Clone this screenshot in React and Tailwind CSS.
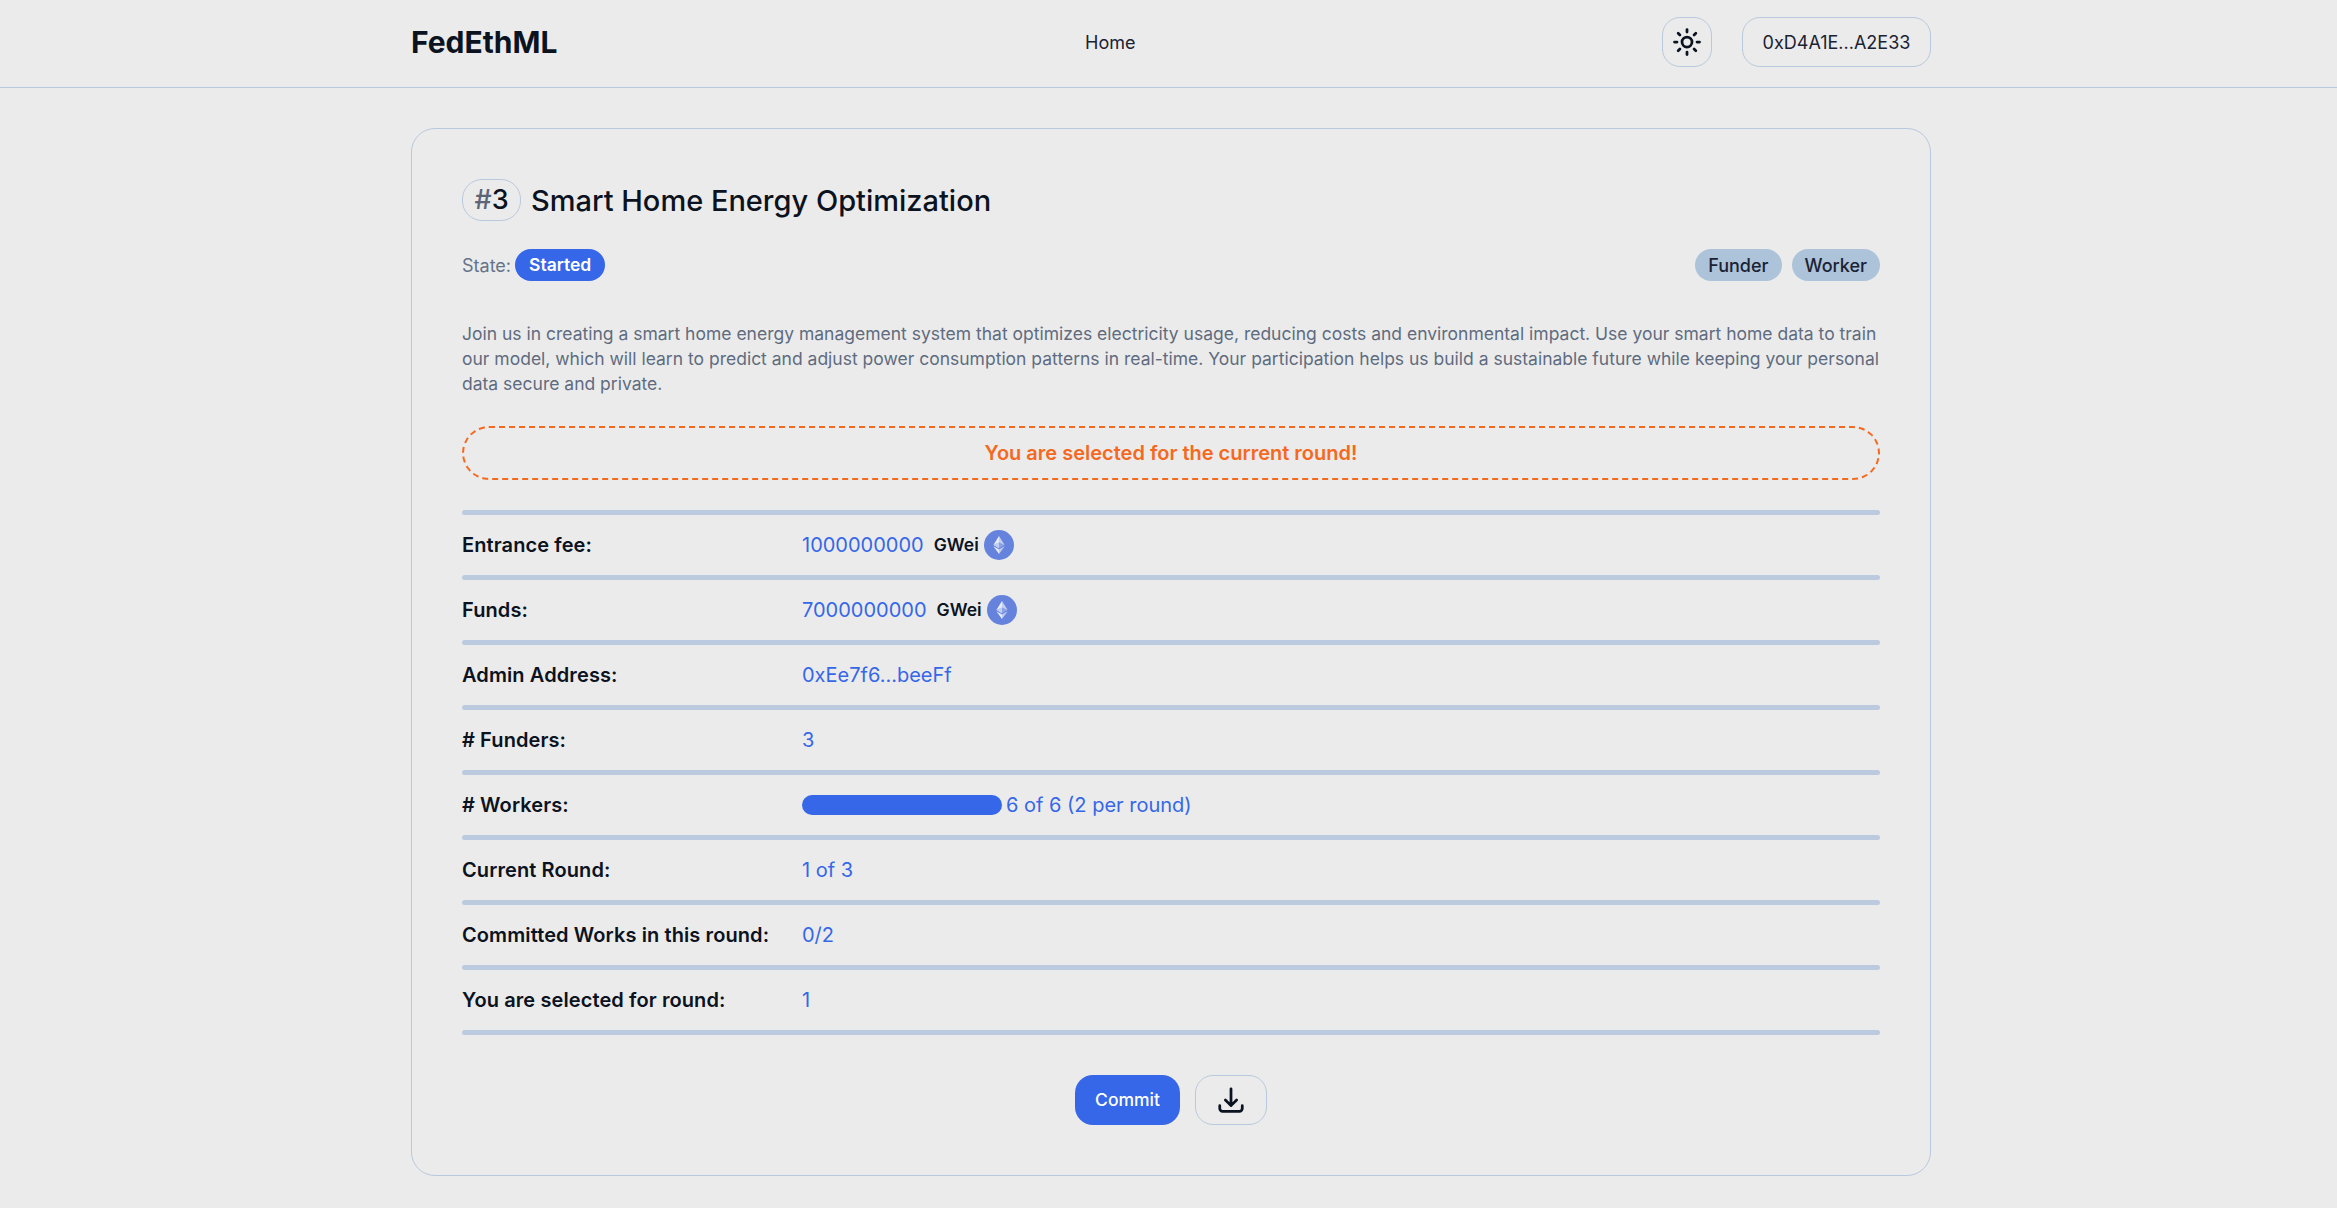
import React from 'react';
import { Sun } from 'lucide-react';

const EthIcon = () => (
    <svg viewBox="0 0 32 32" className="w-[30px] h-[30px] shrink-0">
        <circle cx="16" cy="16" r="16" fill="#6583dd" />
        <path d="M16 6.5v6.8l6 2.7z" fill="#fff" fillOpacity="0.6" />
        <path d="M16 6.5L10 16l6-2.7z" fill="#fff" fillOpacity="0.85" />
        <path d="M16 20.8v4.7l6-8.3z" fill="#fff" fillOpacity="0.6" />
        <path d="M16 25.5v-4.7l-6-3.6z" fill="#fff" fillOpacity="0.85" />
        <path d="M16 19.6l6-3.6-6-2.7z" fill="#fff" fillOpacity="0.25" />
        <path d="M10 16l6 3.6v-6.3z" fill="#fff" fillOpacity="0.6" />
    </svg>
);

const DownloadIcon = () => (
    <svg viewBox="0 0 24 24" fill="none" stroke="#0b1220" strokeWidth="2.2" strokeLinecap="round" strokeLinejoin="round" className="w-[30px] h-[30px]">
        <path d="M3 16.5v2.25A2.25 2.25 0 0 0 5.25 21h13.5A2.25 2.25 0 0 0 21 18.75V16.5M16.5 12 12 16.5m0 0L7.5 12m4.5 4.5V3" />
    </svg>
);

const Gwei = ({ amount }) => (
    <div className="flex items-center">
        <span>{amount}</span>
        <span className="ml-[10px] mr-[5px] text-[17.5px] font-semibold text-[#0b1220]">GWei</span>
        <EthIcon />
    </div>
);

const rows = [
    { label: 'Entrance fee:', value: <Gwei amount="1000000000" /> },
    { label: 'Funds:', value: <Gwei amount="7000000000" /> },
    { label: 'Admin Address:', value: '0xEe7f6...beeFf' },
    { label: '# Funders:', value: '3' },
    {
        label: '# Workers:',
        value: (
            <div className="flex items-center">
                <div className="w-[200px] h-5 rounded-full bg-[#3567e8]" />
                <span className="ml-1">6 of 6 (2 per round)</span>
            </div>
        ),
    },
    { label: 'Current Round:', value: '1 of 3' },
    { label: 'Committed Works in this round:', value: '0/2' },
    { label: 'You are selected for round:', value: '1' },
];

const Rule = () => <div className="h-[5px] rounded-full bg-[#bccadf]" />;

const App = () => {
    return (
        <div className="min-h-[1208px] bg-[#ebebeb] font-['Inter',sans-serif] text-[#0b1220]">
            <header className="border-b border-[#b9c9dd]">
                <div className="mx-auto w-[1525px] pl-[5px] h-[84px] mb-[3px] flex items-center">
                    <div className="w-[674px] text-[30px] font-bold">FedEthML</div>
                    <div className="text-[18px] text-[#1a2233]">Home</div>
                    <div className="ml-auto flex items-center gap-[30px]">
                        <button className="w-[50px] h-[50px] rounded-[18px] border border-[#b9c9dd] flex items-center justify-center">
                            <Sun size={30} strokeWidth={2.2} />
                        </button>
                        <button className="w-[189px] h-[50px] rounded-[18px] border border-[#b9c9dd] text-[18px] text-[#1a2233]">
                            0xD4A1E...A2E33
                        </button>
                    </div>
                </div>
            </header>

            <main className="mx-auto w-[1525px] pl-[5px] pt-[40px]">
                <div className="h-[1048px] rounded-[24px] border border-[#b9c9dd] px-[50px] pt-[50px]">
                    <div className="flex items-center gap-[10px]">
                        <span className="w-[59px] h-[42px] rounded-[20px] border border-[#b9c9dd] flex items-center justify-center text-[27px] font-medium text-[#0b1220]">
                            <span className="text-[#5b6577]">#</span>3
                        </span>
                        <h1 className="text-[29px] font-medium leading-none">Smart Home Energy Optimization</h1>
                    </div>

                    <div className="mt-[28px] flex items-center justify-between">
                        <div className="flex items-center gap-1">
                            <span className="text-[18px] text-[#64748b]">State:</span>
                            <span className="h-8 px-[14px] rounded-full bg-[#3567e8] text-white text-[17.5px] font-semibold flex items-center">Started</span>
                        </div>
                        <div className="flex items-center gap-[10px] text-[18px] font-medium text-[#1a2233]">
                            <span className="h-8 px-[13px] rounded-full bg-[#adc3da] flex items-center">Funder</span>
                            <span className="h-8 px-[13px] rounded-full bg-[#adc3da] flex items-center">Worker</span>
                        </div>
                    </div>

                    <p className="mt-[40px] text-[17.5px] leading-[25px] text-[#5f6b7f]">
                        Join us in creating a smart home energy management system that optimizes electricity usage, reducing costs and environmental impact. Use your smart home data to train our model, which will learn to predict and adjust power consumption patterns in real-time. Your participation helps us build a sustainable future while keeping your personal data secure and private.
                    </p>

                    <div className="mt-[30px] h-[54px] rounded-full border-2 border-dashed border-[#f5691e] flex items-center justify-center text-[20px] font-semibold text-[#f5691e]">
                        You are selected for the current round!
                    </div>

                    <div className="mt-[30px]">
                        <Rule />
                        {rows.map((row) => (
                            <div key={row.label}>
                                <div className="h-[60px] flex items-center text-[20px]">
                                    <div className="w-[340px] font-semibold tracking-[0.1px]">{row.label}</div>
                                    <div className="text-[#3567e8]">{row.value}</div>
                                </div>
                                <Rule />
                            </div>
                        ))}
                    </div>

                    <div className="mt-[40px] flex justify-center gap-[15px]">
                        <button className="w-[105px] h-[50px] rounded-[18px] bg-[#3567e8] text-white text-[17.5px] font-medium">Commit</button>
                        <button className="w-[72px] h-[50px] rounded-[18px] border border-[#b9c9dd] flex items-center justify-center">
                            <DownloadIcon />
                        </button>
                    </div>
                </div>
            </main>
        </div>
    );
};

export default App;
